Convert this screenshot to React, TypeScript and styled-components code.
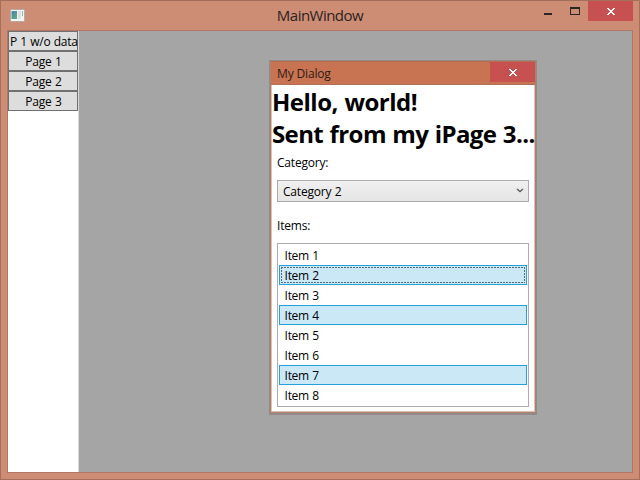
import React from "react";
import styled, { createGlobalStyle, css } from "styled-components";

const GlobalStyle = createGlobalStyle`
  * { box-sizing: border-box; }
  html, body { margin: 0; padding: 0; overflow: hidden; }
  body { font: 12px/16px "Open Sans", "Noto Sans", sans-serif; color: #000; }
`;

const Window = styled.div`
  position: relative;
  display: flex;
  flex-direction: column;
  width: 640px;
  height: 480px;
  padding: 0 6px 6px;
  border: 1px solid #a4705c;
  background: #cd8c74;
`;

const TitleBar = styled.header`
  display: grid;
  grid-template-columns: 92px 1fr 92px;
  height: 29px;
  flex: none;
`;

const AppIcon = styled.svg`
  margin: 8px 0 0 3px;
`;

const WindowTitle = styled.h1`
  margin: 4px 0 0;
  font-size: 15px;
  line-height: 20px;
  font-weight: 400;
  letter-spacing: -0.52px;
  text-align: center;
  color: #2b2321;
`;

const Controls = styled.div`
  display: flex;
  justify-content: flex-end;
  align-items: flex-start;
`;

const ControlGlyph = styled.svg`
  flex: none;
`;

const CloseButton = styled.button<{ $width: number; $height: number }>`
  display: flex;
  align-items: center;
  justify-content: center;
  flex: none;
  width: ${(p) => p.$width}px;
  height: ${(p) => p.$height}px;
  padding: 1px 0 0 1px;
  border: 0;
  background: #c75050;
`;

const Client = styled.div`
  display: flex;
  flex: 1;
  border: 1px solid #b07864;
  background: #a5a5a5;
`;

const Sidebar = styled.nav`
  display: flex;
  flex-direction: column;
  width: 71px;
  background: #fff;
  border-right: 1px solid #d8d8d8;
`;

const PageButton = styled.button<{ $spacing?: number }>`
  height: 20px;
  padding: 1px 0 0 1px;
  border: 1px solid #707070;
  background: #ddd;
  color: #000;
  font: inherit;
  line-height: 18px;
  letter-spacing: ${(p) => p.$spacing ?? 0}px;
  word-spacing: 0.6px;
  white-space: nowrap;
`;

const Dialog = styled.section`
  position: absolute;
  left: 268px;
  top: 59px;
  display: flex;
  flex-direction: column;
  width: 268px;
  height: 355px;
  padding: 0 1px 1px;
  border: 1px solid #918b88;
  border-bottom-width: 2px;
  background: #b57e6b;
`;

const DialogTitleBar = styled.header`
  display: flex;
  justify-content: space-between;
  height: 24px;
  flex: none;
  padding-left: 6px;
  border-top: 1px solid #b96c50;
  border-bottom: 1px solid #b0715a;
  background: #c87351;
`;

const DialogTitle = styled.span`
  padding-top: 4px;
  letter-spacing: -0.15px;
  color: #2b1c15;
`;

const DialogBody = styled.div`
  flex: 1;
  min-height: 0;
  padding: 1px 5px 0;
  border: 1px solid #d6c2ba;
  border-top: 0;
  background: #fff;
`;

const Heading = styled.h2<{ $spacing: number }>`
  margin: 0 -5px;
  height: 32px;
  font-size: 24px;
  line-height: 32px;
  font-weight: 700;
  letter-spacing: ${(p) => p.$spacing}px;
  word-spacing: 0.8px;
  white-space: nowrap;
`;

const Label = styled.div<{ $gap: number }>`
  height: 16px;
  margin-top: ${(p) => p.$gap}px;
  letter-spacing: -0.2px;
`;

const ComboBox = styled.div`
  display: flex;
  align-items: center;
  justify-content: space-between;
  width: 252px;
  height: 22px;
  margin-top: 9px;
  padding: 1px 4px 0 5px;
  border: 1px solid #acacac;
  background: linear-gradient(#f0f0f0, #e5e5e5);
  letter-spacing: -0.2px;
  word-spacing: 0.6px;
`;

const ComboArrow = styled.svg`
  margin-bottom: 2px;
`;

const ListBox = styled.ul`
  width: 252px;
  height: 164px;
  margin: 9px 0 0;
  padding: 1px;
  border: 1px solid #abadb3;
  list-style: none;
`;

const ListItem = styled.li<{ $selected: boolean; $focused: boolean }>`
  position: relative;
  height: 20px;
  padding: 1px 4.6px;
  border: 1px solid transparent;
  line-height: 18px;
  letter-spacing: -0.3px;
  word-spacing: 0.6px;
  ${(p) =>
    p.$selected &&
    css`
      background: #cbe8f6;
      border-color: #26a0da;
    `}
  ${(p) =>
    p.$focused &&
    css`
      &::after {
        content: "";
        position: absolute;
        inset: 1px;
        background:
          repeating-linear-gradient(90deg, #526b78 0 2px, transparent 2px 3px) top / 100% 1px no-repeat,
          repeating-linear-gradient(90deg, #526b78 0 2px, transparent 2px 3px) bottom / 100% 1px no-repeat,
          repeating-linear-gradient(#526b78 0 2px, transparent 2px 3px) left / 1px 100% no-repeat,
          repeating-linear-gradient(#526b78 0 2px, transparent 2px 3px) right / 1px 100% no-repeat;
      }
    `}
`;

const items = [1, 2, 3, 4, 5, 6, 7, 8];
const selected = [2, 4, 7];

const Cross = () => (
  <svg width="8" height="7" viewBox="0 0 8 7" shapeRendering="crispEdges">
    <path d="M0 0h2v1h1v1h2V1h1V0h2v1H7v1H6v1H5v1h1v1h1v1h1v1H6V6H5V5H3v1H2v1H0V6h1V5h1V4h1V3H2V2H1V1H0z" fill="#fff" />
  </svg>
);

export default function App() {
  return (
    <>
      <GlobalStyle />
      <Window>
        <TitleBar>
          <AppIcon width="16" height="14" viewBox="0 0 16 14">
            <defs>
              <linearGradient id="pane" x2="1" y2="1">
                <stop stopColor="#557fa7" />
                <stop offset="1" stopColor="#55b08b" />
              </linearGradient>
            </defs>
            <rect x=".5" y=".5" width="14" height="12" rx="1" fill="#f5f4f2" stroke="#b3aaa6" />
            <path d="M1.5 2H7v8H1.5z" fill="url(#pane)" />
            <path d="M8 2h3v8H8z" fill="#dedfe0" />
            <path d="M12 2h1v5h-1z" fill="#8fb8a9" />
          </AppIcon>
          <WindowTitle>MainWindow</WindowTitle>
          <Controls>
            <ControlGlyph width="51" height="20" viewBox="0 0 51 20" shapeRendering="crispEdges">
              <path d="M7 12h8v2H7z" fill="#2b2523" />
              <path d="M33 6h10v8H33zM34 8v5h8V8z" fillRule="evenodd" fill="#2b2523" />
            </ControlGlyph>
            <CloseButton $width={45} $height={20} aria-label="Close"><Cross /></CloseButton>
          </Controls>
        </TitleBar>
        <Client>
          <Sidebar>
            <PageButton $spacing={-0.3}>P 1 w/o data</PageButton>
            <PageButton $spacing={-0.2}>Page 1</PageButton>
            <PageButton $spacing={-0.2}>Page 2</PageButton>
            <PageButton $spacing={-0.2}>Page 3</PageButton>
          </Sidebar>
        </Client>
        <Dialog>
          <DialogTitleBar>
            <DialogTitle>My Dialog</DialogTitle>
            <CloseButton $width={45} $height={20} aria-label="Close"><Cross /></CloseButton>
          </DialogTitleBar>
          <DialogBody>
            <Heading $spacing={-0.5}>Hello, world!</Heading>
            <Heading $spacing={-0.6}>Sent from my iPage 3...</Heading>
            <Label $gap={5}>Category:</Label>
            <ComboBox>
              Category 2
              <ComboArrow width="8" height="6" viewBox="0 0 8 6">
                <path d="M1 1l3 2.5L7 1" fill="none" stroke="#606060" strokeWidth="1.5" />
              </ComboArrow>
            </ComboBox>
            <Label $gap={16}>Items:</Label>
            <ListBox>
              {items.map((n) => (
                <ListItem key={n} $selected={selected.includes(n)} $focused={n === 2}>
                  Item {n}
                </ListItem>
              ))}
            </ListBox>
          </DialogBody>
        </Dialog>
      </Window>
    </>
  );
}
